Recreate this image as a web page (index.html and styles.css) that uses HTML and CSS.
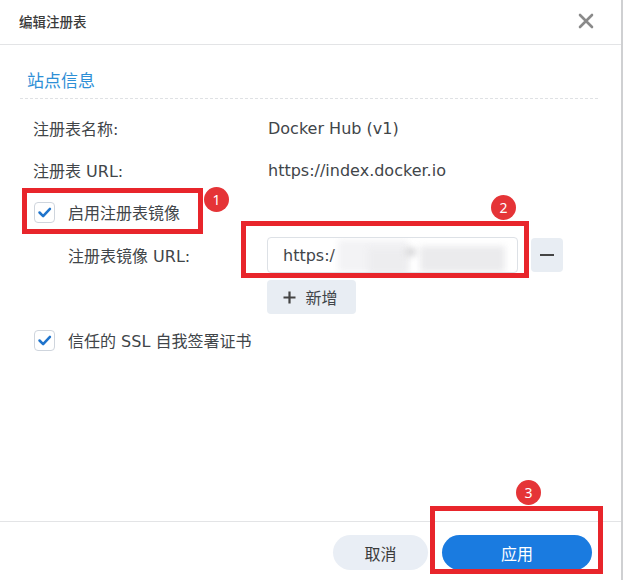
FILE: index.html
```html
<!DOCTYPE html>
<html lang="zh-CN">
<head>
<meta charset="utf-8">
<title>编辑注册表</title>
<link rel="stylesheet" href="styles.css">
</head>
<body>
<div class="dialog">
  <div class="header">
    <span class="title">编辑注册表</span>
    <svg class="close" width="16" height="16" viewBox="0 0 16 16"><path d="M2 2 L14 14 M14 2 L2 14" stroke="#8a8a8a" stroke-width="2.6" stroke-linecap="round"/></svg>
  </div>
  <div class="body">
    <div class="section-title">站点信息</div>
    <div class="row">
      <span class="label">注册表名称:</span>
      <span class="value">Docker Hub (v1)</span>
    </div>
    <div class="row">
      <span class="label">注册表 URL:</span>
      <span class="value">https://index.docker.io</span>
    </div>
    <div class="row check-row">
      <span class="checkbox"><svg width="21" height="21" viewBox="0 0 21 21"><path d="M5 10.5 L9 14.5 L16.5 6.5" fill="none" stroke="#1f74cc" stroke-width="2.8" stroke-linecap="round" stroke-linejoin="round"/></svg></span>
      <span class="check-label">启用注册表镜像</span>
      <span class="mark mark1"></span>
      <span class="badge badge1">1</span>
    </div>
    <div class="row mirror-row">
      <span class="label sub">注册表镜像 URL:</span>
      <div class="input">
        <span class="input-text">https:/</span>
        <span class="smudge s1"></span>
        <span class="smudge s2"></span>
        <span class="smudge s3"></span>
        <span class="smudge s4"></span>
      </div>
      <button class="minus"><span class="minus-bar"></span></button>
      <span class="mark mark2"></span>
      <span class="badge badge2">2</span>
    </div>
    <div class="add-row">
      <button class="add"><svg width="13" height="13" viewBox="0 0 13 13"><path d="M6.5 0.5 V12.5 M0.5 6.5 H12.5" stroke="#444" stroke-width="2.2"/></svg><span>新增</span></button>
    </div>
    <div class="row check-row ssl">
      <span class="checkbox"><svg width="21" height="21" viewBox="0 0 21 21"><path d="M5 10.5 L9 14.5 L16.5 6.5" fill="none" stroke="#1f74cc" stroke-width="2.8" stroke-linecap="round" stroke-linejoin="round"/></svg></span>
      <span class="check-label">信任的 SSL 自我签署证书</span>
    </div>
  </div>
  <div class="footer">
    <button class="btn cancel">取消</button>
    <button class="btn apply">应用</button>
    <span class="mark mark3"></span>
    <span class="badge badge3">3</span>
  </div>
</div>
</body>
</html>
```

FILE: styles.css
```css
* { box-sizing: border-box; }
html, body { margin: 0; padding: 0; background: #fff; }
body {
  font-family: "DejaVu Sans", "Noto Sans CJK SC", sans-serif;
  color: #414549;
}
.dialog {
  width: 623px;
  height: 580px;
  border-right: 2px solid #cfd0d2;
  display: flex;
  flex-direction: column;
  position: relative;
}
.header {
  height: 45px;
  border-bottom: 1px solid #e3e4e6;
  display: flex;
  align-items: center;
  justify-content: space-between;
  padding: 0 27px 2px 19px;
}
.title {
  font-family: "Noto Sans CJK SC", sans-serif;
  font-size: 13.5px;
  font-weight: 500;
  color: #3a3a3a;
}
.close { display: block; }
.body {
  flex: 1;
  padding: 0 23px 0 20px;
}
.section-title {
  margin-top: 22px;
  padding: 0 0 5px 7px;
  font-family: "Noto Sans CJK SC", sans-serif;
  font-size: 17px;
  line-height: 26px;
  color: #2e8fd6;
  border-bottom: 1px dashed #dfe1e4;
}
.row {
  display: flex;
  align-items: center;
  height: 42px;
  padding-left: 13px;
  font-size: 16px;
  position: relative;
}
.row:nth-of-type(2) { margin-top: 8px; }
.label { width: 235px; flex: none; }
.value { color: #414549; }
.check-row { padding-left: 14px; }
.checkbox {
  width: 21px;
  height: 21px;
  border: 1px solid #cfd5dd;
  border-radius: 4px;
  background: #fff;
  display: flex;
  align-items: center;
  justify-content: center;
  flex: none;
}
.checkbox svg { display: block; }
.check-label { margin-left: 13px; }
.mirror-row {
  margin-top: 4px;
  height: 36px;
  padding-left: 48px;
}
.label.sub { width: 199px; }
.input {
  width: 251px;
  height: 36px;
  border: 1px solid #dde1e6;
  border-radius: 4px;
  display: flex;
  align-items: center;
  padding-left: 15px;
  position: relative;
  overflow: hidden;
  background: #fff;
}
.input-text { font-size: 16px; color: #414549; }
.smudge {
  position: absolute;
  filter: blur(3px);
}
.s1 { left: 70px; top: 2px; width: 70px; height: 32px; background: #f3f3f5; }
.s2 { left: 100px; top: 10px; width: 40px; height: 26px; background: #ededef; }
.s3 { left: 152px; top: 8px; width: 85px; height: 26px; background: #ebebed; }
.s4 { left: 138px; top: 10px; width: 10px; height: 8px; background: #d6d6d8; }
.minus {
  margin-left: 13px;
  width: 32px;
  height: 34px;
  border: none;
  border-radius: 4px;
  background: #e8edf3;
  display: flex;
  align-items: center;
  justify-content: center;
  padding: 0;
}
.minus-bar { width: 14px; height: 2.5px; background: #444; }
.add-row {
  padding-left: 247px;
  margin-top: 7px;
}
.add {
  width: 89px;
  height: 34px;
  border: none;
  border-radius: 4px;
  background: #e8edf3;
  display: flex;
  align-items: center;
  justify-content: center;
  gap: 9px;
  font-family: inherit;
  font-size: 16px;
  color: #414549;
  padding: 0 2px 0 0;
}
.add svg { display: block; }
.ssl { margin-top: 5px; }
.footer {
  height: 59px;
  border-top: 1px solid #e3e4e6;
  display: flex;
  justify-content: flex-end;
  align-items: flex-start;
  padding: 13px 29px 0 0;
  gap: 14px;
  position: relative;
}
.btn {
  height: 35px;
  border: none;
  border-radius: 18px;
  font-family: "Noto Sans CJK SC", sans-serif;
  font-size: 16px;
}
.cancel { width: 95px; background: #e9eef5; color: #3a3a3a; }
.apply { width: 150px; background: #1a7be0; color: #fff; }
.mark {
  position: absolute;
  border: 5px solid #e8252b;
  pointer-events: none;
}
.mark1 { left: 2px; top: -3px; width: 181px; height: 46px; }
.mark2 { left: 221px; top: -16px; width: 288px; height: 57px; }
.mark3 { left: 430px; top: -16px; width: 173px; height: 68px; }
.badge {
  position: absolute;
  width: 25px;
  height: 25px;
  border-radius: 50%;
  background: #e53437;
  color: #fff;
  font-family: "Noto Sans", sans-serif;
  font-size: 14px;
  line-height: 25px;
  text-align: center;
}
.badge1 { left: 184px; top: -4px; }
.badge2 { left: 471px; top: -42px; }
.badge3 { left: 516px; top: -42px; }
```
